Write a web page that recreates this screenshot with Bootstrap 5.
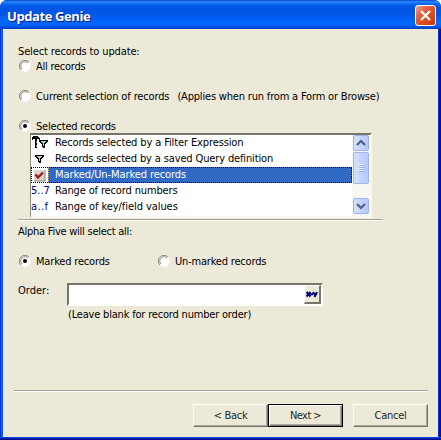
<!DOCTYPE html>
<html lang="en">
<head>
<meta charset="utf-8">
<meta name="viewport" content="width=device-width, initial-scale=1">
<title>Update Genie</title>
<link href="https://cdn.jsdelivr.net/npm/bootstrap@5.3.0/dist/css/bootstrap.min.css" rel="stylesheet">
<style>
body{background:#fff;font:11px/15px "DejaVu Sans Condensed","DejaVu Sans",sans-serif;font-stretch:condensed;color:#000;overflow:hidden}
.window{width:441px;height:440px;background:#0a4fe4;border-radius:7px 7px 0 0;overflow:hidden}
.titlebar{height:29px;padding:2px 5px 0 7px;background:linear-gradient(#0848c8 0,#2a8bff 2px,#0a66f2 4px,#0055e3 7px,#0056e6 14px,#0264fa 20px,#0267ff 25px,#0050dc 27px,#0040c8 29px)}
.titlebar h1{font:700 13px/27px "Open Sans","Noto Sans",sans-serif;color:#fff;text-shadow:1px 1px #0a1883;padding-top:1px}
.close-btn{width:21px;height:21px;padding:0;border:1px solid #fff;border-radius:3px;background:linear-gradient(135deg,#f0a088 0,#e0603c 35%,#d84418 75%,#b83008 100%)}
.frame{height:411px;background:linear-gradient(90deg,#0831d9 0 1px,#0a5cf0 1px 3px,#0a3fd8 3px 438px,#0831d9 438px 439px,#00138c 439px);padding:0 3px 0 3px}
.client{height:408px;background:#ece9d8;padding:15px 10px 0 11px}
.base{height:3px;margin:0 -3px;background:linear-gradient(#0a46e0 0 1px,#0020b0 1px 2px,#00138c 2px)}
.line{height:15px;white-space:nowrap}
.option{height:15px;padding-left:1px;white-space:nowrap}
.option svg{margin:-2px 5px 0 0}
.opt-wide{width:139px}
.gap15{height:15px}
.listbox{width:342px;height:85px;margin:-1px 0 0 16px;background:#fff;border:solid;border-width:2px 2px 2px 1px;border-color:#77756a #f8f7f0 #f8f7f0 #8a887c}
.rows{width:321px}
.entry{height:16px;line-height:16px;white-space:nowrap}
.entry .glyph{width:17px;height:16px;margin-right:7px;color:#000080;flex:none}
.entry.chosen .cap{background:#316ac5;color:#fff;margin-left:-7px;padding-left:7px}
.entry.chosen{outline:1px dotted #000;outline-offset:-1px}
.entry.chosen .cap{outline:1px dotted #e9a33c;outline-offset:-1px}
.rule{height:2px;border-top:1px solid #a5a293;background:#fff}
.r1{width:365px;margin-top:1px}
.field{width:256px;height:23px;border:2px solid;border-color:#77756a #fffef8 #fffef8 #77756a;background:#fff}
.xy{width:17px;height:19px;padding:0;background:#ece9d8;border:solid;border-width:1px 2px 2px 1px;border-color:#fff #77756a #77756a #fff;border-radius:0;line-height:0}
.push{width:75px;height:23px;padding:0;border-radius:0;background:#ece9d8;font:inherit;line-height:19px;border:1px solid;border-color:#fff #77756a #77756a #fff;box-shadow:inset -1px -1px #aca899}
.push.main{border:1px solid #000;box-shadow:inset 1px 1px #fff,inset -1px -1px #77756a,inset -2px -2px #aca899}
.alpha{margin-top:3px}
.order-row{margin-top:14px}
.order-label{width:49px}
.hint{padding:1px 0 0 1px}
.r2{margin-top:69px}
.actions{margin-top:12px}
.cancel{margin-left:10px}
.title-text{letter-spacing:-.4px}
.t1{letter-spacing:-.13px}
.t8{letter-spacing:-.08px}
.t12{letter-spacing:-.07px}
.t2,.t13,.t20{letter-spacing:-.25px}
.t4{letter-spacing:-.18px}
.t3,.t7,.t10{letter-spacing:-.14px}
.t6{letter-spacing:-.12px}
.t14{letter-spacing:-.18px}
.t5,.t15,.t17{letter-spacing:-.19px}
.t11{letter-spacing:.35px}
.t18{letter-spacing:-.3px}
.t19{letter-spacing:-.55px}
</style>
<script src="https://cdn.jsdelivr.net/npm/bootstrap@5.3.0/dist/js/bootstrap.bundle.min.js"></script>
</head>
<body>
<svg width="0" height="0" class="d-none">
<defs>
<g id="ring"><circle cx="6" cy="6" r="5.4" fill="#fff"/><path d="M2 10A5.4 5.4 0 0 1 10 2" fill="none" stroke="#8a887c"/><path d="M3 9A4.2 4.2 0 0 1 9 3" fill="none" stroke="#5f5d54" stroke-width=".7"/><path d="M10.500 3A5.400 5.400 0 0 1 3 10.500" fill="none" stroke="#fff"/></g>
<path id="funnel" d="M0 0H9V2H8V3H7V4H6V8H4V7H3V4H2V3H1V2H0Z"/>
</defs>
</svg>
<main class="window">
<header class="titlebar d-flex justify-content-between align-items-center"><h1 class="m-0"><span class="title-text">Update Genie</span></h1>
<button class="btn close-btn d-flex align-items-center justify-content-center" aria-label="Close"><svg width="13" height="13" viewBox="0 0 13 13"><path d="M2 2L11 11M11 2L2 11" stroke="#fff" stroke-width="2.2"/></svg></button></header>
<div class="frame"><div class="client">
<div class="ps-1">
<div class="line t1">Select records to update:</div>
<label class="option d-flex align-items-center"><svg width="12" height="12"><use href="#ring"/></svg><span class="t2">All records</span></label>
<div class="gap15"></div>
<label class="option d-flex align-items-center"><svg width="12" height="12"><use href="#ring"/></svg><span class="t3">Current selection of records</span><span class="t4 ms-2">(Applies when run from a Form or Browse)</span></label>
<div class="gap15"></div>
<label class="option d-flex align-items-center"><svg width="12" height="12"><use href="#ring"/><circle cx="6" cy="6" r="2"/></svg><span class="t5">Selected records</span></label>
</div>
<div class="listbox d-flex">
<div class="rows">
<div class="entry d-flex"><svg class="glyph" viewBox="0 0 17 16" shape-rendering="crispEdges"><path d="M1 2H2V1H7V2H8V3H9V5H8V4H6V13H4V4H2V5H1Z" fill="#000"/><path d="M5 6h1v2h-1zM5 10h1v2h-1z" fill="#888"/><use href="#funnel" x="8" y="5"/><path d="M10 6h5v1h-1v1h-1v3h-1v-3h-1v-1h-1Z" fill="#7de0e0"/></svg><span class="cap t6">Records selected by a Filter Expression</span></div>
<div class="entry d-flex"><svg class="glyph" viewBox="0 0 17 16" shape-rendering="crispEdges"><use href="#funnel" x="4" y="4"/><path d="M6 5h5v1h-1v1h-1v3h-1v-3h-1v-1h-1Z" fill="#ccc"/></svg><span class="cap t7">Records selected by a saved Query definition</span></div>
<div class="entry chosen d-flex"><svg class="glyph" viewBox="0 0 17 16"><path d="M3 3H14V14H3Z" fill="#d8d4cc"/><path d="M14 3V14H3" fill="none" stroke="#888"/><path d="M4.500 7.500L7 10.500L12 5.500" fill="none" stroke="#a01818" stroke-width="2.4"/></svg><span class="cap flex-grow-1"><span class="t8">Marked/Un-Marked records</span></span></div>
<div class="entry d-flex"><span class="glyph t9">5..7</span><span class="cap t10">Range of record numbers</span></div>
<div class="entry d-flex"><span class="glyph t11">a..f</span><span class="cap t12">Range of key/field values</span></div>
</div>
<svg width="18" height="81" viewBox="0 0 18 81">
<defs><linearGradient id="thumb"><stop stop-color="#d5e1ff"/><stop offset="1" stop-color="#b4c8f8"/></linearGradient></defs>
<rect width="18" height="81" fill="#f8f7f1"/>
<g fill="url(#thumb)" stroke="#9bb4ee"><rect x="1.500" y=".5" width="15" height="15" rx="1.500"/><rect x="1.500" y="17.500" width="15" height="31" rx="1.500"/><rect x="1.500" y="63.500" width="15" height="15" rx="1.500"/></g>
<path d="M5 10L9 6L13 10M5 69L9 73L13 69" fill="none" stroke="#4d6185" stroke-width="2.2"/>
<path d="M6 29.500h6M6 31.500h6M6 33.500h6M6 35.500h6" stroke="#eef4fe"/><path d="M7 30.500h6M7 32.500h6M7 34.500h6M7 36.500h6" stroke="#8cb0f8"/></svg>
</div>
<div class="rule ms-1 r1"></div>
<div class="ps-1">
<div class="line t13 alpha">Alpha Five will select all:</div>
<div class="gap15"></div>
<div class="d-flex"><label class="option opt-wide d-flex align-items-center"><svg width="12" height="12"><use href="#ring"/><circle cx="6" cy="6" r="2"/></svg><span class="t14">Marked records</span></label>
<label class="option d-flex align-items-center"><svg width="12" height="12"><use href="#ring"/></svg><span class="t15">Un-marked records</span></label></div>
<div class="d-flex order-row"><div class="line order-label"><span class="t16">Order:</span></div>
<div><div class="field d-flex justify-content-end"><button class="btn xy" aria-label="Expression builder"><svg width="12" height="7" viewBox="0 0 12 7" fill="none" stroke="#000080" stroke-width="2"><path d="M.5 1L4.500 5.500M4.500 1L.5 5.500M4.500 3.300H7M7 1L9 4M11.200 1L8.500 6"/></svg></button></div><div class="line hint"><span class="t17">(Leave blank for record number order)</span></div></div></div>
</div>
<div class="rule r2"></div>
<div class="d-flex justify-content-end actions"><button class="btn push"><span class="t18">&lt; Back</span></button><button class="btn push main"><span class="t19">Next &gt;</span></button><button class="btn push cancel"><span class="t20">Cancel</span></button></div>
</div><div class="base"></div></div>
</main>
</body>
</html>
